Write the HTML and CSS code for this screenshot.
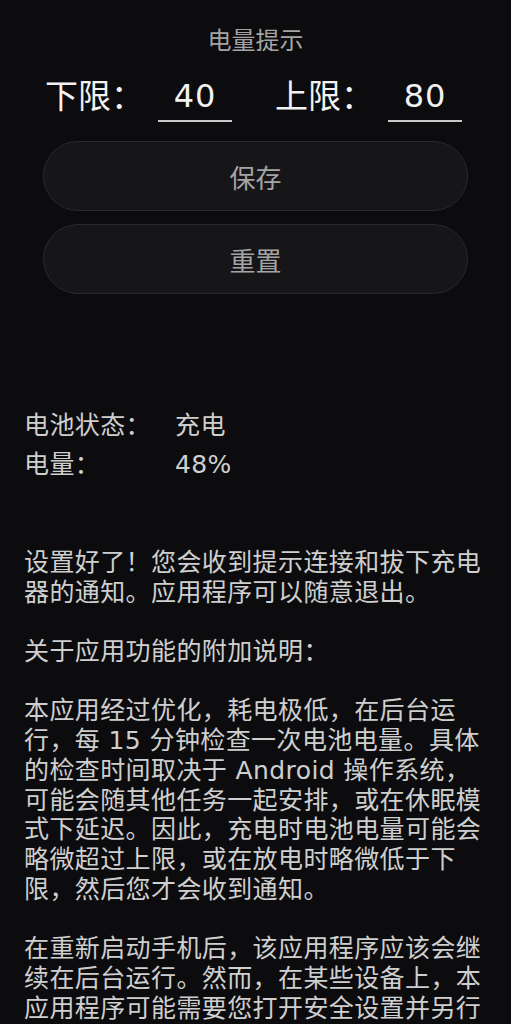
FILE: index.html
```html
<!DOCTYPE html>
<html lang="zh-CN">
<head>
  <meta charset="UTF-8">
  <title>电量提示</title>
  <link rel="stylesheet" href="styles.css">
</head>
<body>
<div class="page">
  <div class="title">电量提示</div>
  <div class="limits">
    <div class="field">
      <span class="label">下限：</span>
      <input class="limit-input" type="text" value="40">
    </div>
    <div class="field">
      <span class="label">上限：</span>
      <input class="limit-input" type="text" value="80">
    </div>
  </div>
  <div class="buttons">
    <button class="btn">保存</button>
    <button class="btn">重置</button>
  </div>
  <div class="status">
    <span>电池状态：</span><span>充电</span>
    <span>电量：</span><span>48%</span>
  </div>
  <div class="info">
    <p>设置好了！您会收到提示连接和拔下充电器的通知。应用程序可以随意退出。</p>
    <p>关于应用功能的附加说明：</p>
    <p>本应用经过优化，耗电极低，在后台运行，每 15 分钟检查一次电池电量。具体的检查时间取决于 Android 操作系统，可能会随其他任务一起安排，或在休眠模式下延迟。因此，充电时电池电量可能会略微超过上限，或在放电时略微低于下限，然后您才会收到通知。</p>
    <p>在重新启动手机后，该应用程序应该会继续在后台运行。然而，在某些设备上，本应用程序可能需要您打开安全设置并另行允许它自动启动。</p>
  </div>
</div>
</body>
</html>
```

FILE: styles.css
```css
:root{
  --background: #0c0c0e;
  --button-bg: #161619;
  --button-border: #2a2a2d;
  --text: #cfcfcf;
  --text-dim: #a4a4a4;
  --font: "DejaVu Sans", "Noto Sans CJK SC", sans-serif;
}
body{
  margin: 0;
  padding: 0;
  background-color: var(--background);
  font-family: var(--font);
  color: var(--text);
}
.page{
  padding: 25px 0 0 0;
}
.title{
  text-align: center;
  font-size: 24px;
  line-height: 32px;
  color: var(--text-dim);
}
.limits{
  display: flex;
  gap: 43px;
  padding-left: 45px;
  margin-top: 14px;
}
.field{
  display: flex;
  align-items: flex-end;
  gap: 14px;
}
.label{
  font-size: 33px;
  line-height: 50px;
  color: #f2f2f2;
}
.limit-input{
  width: 74px;
  height: 49px;
  box-sizing: content-box;
  padding: 0;
  margin: 0;
  border: 0;
  border-bottom: 2px solid #c8c8c8;
  background: transparent;
  color: #f2f2f2;
  font-family: var(--font);
  font-size: 32px;
  letter-spacing: 1px;
  text-align: center;
  outline: none;
}
.buttons{
  display: flex;
  flex-direction: column;
  gap: 13px;
  margin: 19px 43px 0 43px;
}
.btn{
  height: 70px;
  border-radius: 35px;
  border: 1.5px solid var(--button-border);
  background-color: var(--button-bg);
  color: var(--text-dim);
  font-family: var(--font);
  font-size: 26px;
  padding: 0;
}
.status{
  display: grid;
  grid-template-columns: 151px auto;
  margin: 112px 24px 0 24px;
  font-size: 25px;
  line-height: 39px;
  letter-spacing: 0.4px;
}
.info{
  margin: 64px 24px 0 24px;
  max-width: 460px;
  font-size: 25px;
  line-height: 29.7px;
  letter-spacing: 0.4px;
}
.info p{
  margin: 0 0 29.7px 0;
}
```
